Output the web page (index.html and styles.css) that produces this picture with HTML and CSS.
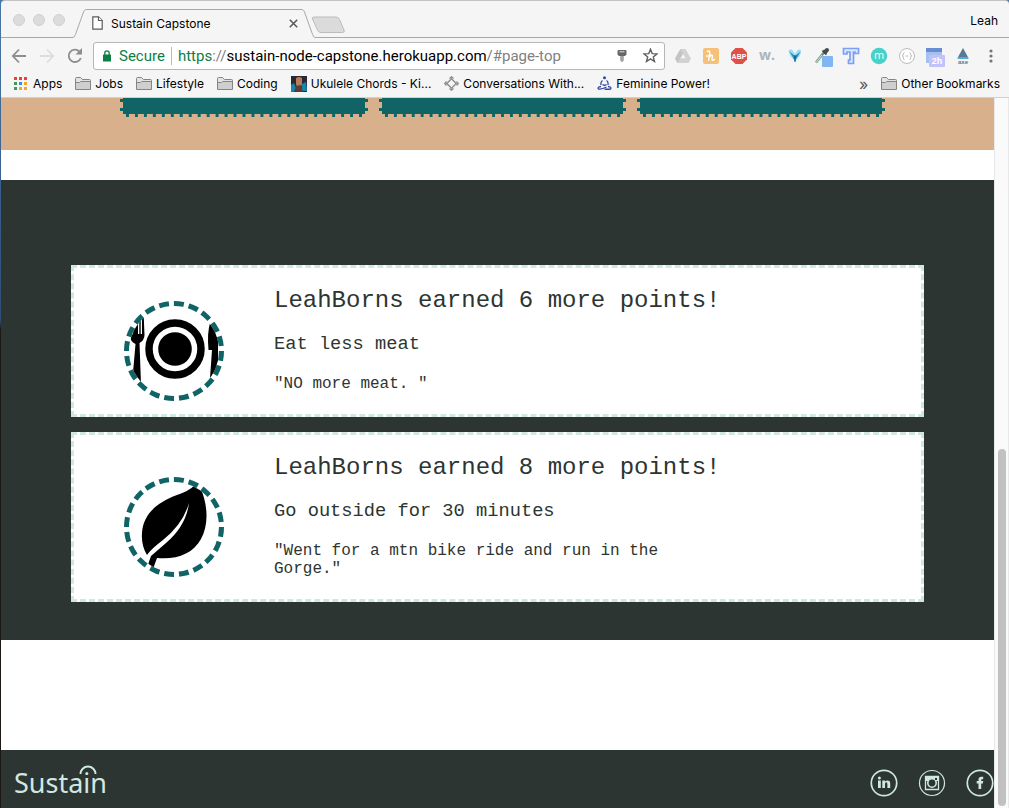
FILE: index.html
```html
<!DOCTYPE html>
<html lang="en">
<head>
<meta charset="utf-8">
<title>Sustain Capstone</title>
<link rel="stylesheet" href="styles.css">
</head>
<body>
<div class="window">
  <header class="chrome">
    <div class="tabstrip">
      <div class="lights"><button class="light" aria-label="Close"></button><button class="light" aria-label="Minimize"></button><button class="light" aria-label="Zoom"></button></div>
      <div class="tab">
        <svg class="tab-edge" width="14" height="29" viewBox="0 0 14 29"><path d="M0 28.5 C2 28 2 26 3 24 L10.500 3 C11.500 1 12 .5 14 .5" fill="none" stroke="#a9a9a9"/></svg>
        <div class="tab-body">
          <svg width="11" height="14" viewBox="0 0 11 14" fill="#fff" stroke="#5a5a5a" stroke-width="1.200"><path d="M.8 .8H6.500L10.200 4.500V13.200H.8Z"/><path d="M6.500 .8V4.500H10.200"/></svg>
          <span class="tab-title">Sustain Capstone</span>
          <button class="icon-btn close" aria-label="Close tab"><svg width="9" height="9" viewBox="0 0 9 9" stroke="#5a5a5a" stroke-width="1.600"><path d="M.8 .8L8.200 8.200M8.200 .8L.8 8.200"/></svg></button>
        </div>
        <svg class="tab-edge" width="14" height="29" viewBox="0 0 14 29"><path d="M14 28.500 C12 28 12 26 11 24 L3.500 3 C2.500 1 2 .5 0 .5" fill="none" stroke="#a9a9a9"/></svg>
      </div>
      <button class="icon-btn new-tab" aria-label="New tab"><svg width="35" height="18" viewBox="0 0 35 18"><path d="M3 1H25Q27.500 1 28.500 3.500L33 14Q34 16.500 31.500 16.500H10Q7.500 16.500 6.500 14L1.500 3Q1 1 3 1Z" fill="#dbdbdb" stroke="#bcbcbc"/></svg></button>
      <span class="profile">Leah</span>
    </div>

    <div class="toolbar">
      <button class="icon-btn slot" aria-label="Back"><svg width="16" height="16" viewBox="0 0 16 16" fill="none" stroke="#8e8e8e" stroke-width="1.800"><path d="M15 8H2M8 1.500L1.800 8L8 14.500"/></svg></button>
      <button class="icon-btn slot" aria-label="Forward"><svg width="16" height="16" viewBox="0 0 16 16" fill="none" stroke="#dcdcdc" stroke-width="1.800"><path d="M1 8H14M8 1.500L14.200 8L8 14.500"/></svg></button>
      <button class="icon-btn slot" aria-label="Reload"><svg width="16" height="16" viewBox="0 0 16 16"><path d="M13.800 10A6.200 6.200 0 1 1 12.500 3.600" fill="none" stroke="#8e8e8e" stroke-width="1.900"/><path d="M15 0V6.500H8.500Z" fill="#8e8e8e"/></svg></button>
      <div class="omnibox">
        <svg width="8" height="12" viewBox="0 0 8 12"><rect y="4.500" width="8" height="7" rx=".6" fill="#0b8043"/><path d="M1.800 5V3a2.200 2.200 0 0 1 4.400 0V5" fill="none" stroke="#0b8043" stroke-width="1.300"/></svg>
        <span class="secure">Secure</span>
        <div class="url" role="textbox" aria-label="Address" contenteditable="true" spellcheck="false"><span class="scheme">https</span><span class="muted">://</span>sustain-node-capstone.herokuapp.com<span class="muted">/#page-top</span></div>
        <button class="icon-btn slot" aria-label="Saved password"><svg width="10" height="12" viewBox="0 0 10 12"><path d="M1.500 0H8.500Q9.500 0 9.500 1V4.500L8 6H6.500V10.500L5 12L3.500 10.500V6H2L.5 4.500V1Q.5 0 1.500 0Z" fill="#666"/><path d="M2.500 1.800H7.500M5 6V11" stroke="#eee" stroke-width=".9"/></svg></button>
        <button class="icon-btn slot" aria-label="Bookmark this page"><svg width="15" height="15" viewBox="0 0 15 15"><path d="M7.500 1.200L9.200 5.600L14 5.900L10.300 8.900L11.500 13.500L7.500 10.900L3.500 13.500L4.700 8.900L1 5.900L5.800 5.600Z" fill="none" stroke="#606060" stroke-width="1.400"/></svg></button>
      </div>
      <div class="extensions">
        <button class="icon-btn slot" aria-label="Drive"><svg width="18" height="18" viewBox="0 0 18 18"><path d="M6.500 2H11.500L17 11.500L14.500 16H3.500L1 11.500Z" fill="#d2d2d2"/><path d="M6.500 2L9 6.500L3.500 16L1 11.500Z" fill="#c4c4c4"/><path d="M9 7L11.500 11.200H6.600Z" fill="#f5f5f5"/></svg></button>
        <button class="icon-btn slot" aria-label="Honey"><svg width="16" height="16" viewBox="0 0 16 16"><rect width="16" height="16" rx="2" fill="#f7c078"/><path d="M4 4Q7 1.500 6.800 5L5.500 13M3 8Q6 8.500 8 6.500M6 9.500Q9.500 5.500 9.500 8.500L9 11.500Q9.300 13.500 12 11" fill="none" stroke="#fff" stroke-width="1.400"/></svg></button>
        <button class="icon-btn slot" aria-label="Adblock Plus"><svg width="18" height="18" viewBox="0 0 18 18"><path d="M5.500 1H12.500L17 5.500V12.500L12.500 17H5.500L1 12.500V5.500Z" fill="#df5147"/><text x="9" y="12" text-anchor="middle" class="t-abp">ABP</text></svg></button>
        <button class="icon-btn slot" aria-label="WebAnnotator"><svg width="20" height="18" viewBox="0 0 20 18"><text x="10" y="13" text-anchor="middle" class="t-w">w.</text></svg></button>
        <button class="icon-btn slot" aria-label="Vector tool"><svg width="18" height="18" viewBox="0 0 18 18"><circle cx="9" cy="9" r="6.500" fill="#e8f5fb"/><path d="M2.500 3.500Q5 1.500 7 4L9 7L11 4Q13 1.500 15 3.500Q15.500 6 13.500 9L10 13Q9 15.500 8 13L4.500 9Q2.500 6 2.500 3.500Z" fill="#9bdcf3"/><path d="M3.500 4.500L9 14V9ZM14.500 4.500L9 14V9Z" fill="#258dc0"/><path d="M9 8V15" stroke="#174863"/></svg></button>
        <button class="icon-btn slot" aria-label="Color picker"><svg class="low" width="20" height="20" viewBox="0 0 20 20"><rect x="9" y="9" width="11" height="11" rx="1" fill="#80b7f2"/><path d="M3 15.500L10.500 6" stroke="#6f9985" stroke-width="2.500"/><path d="M3 15.500L9 8" stroke="#d7e9df"/><path d="M9.500 3.500L13.500 7.500" stroke="#454b49" stroke-width="1.800"/><path d="M12 5L14 3" stroke="#454b49" stroke-width="4" stroke-linecap="round"/></svg></button>
        <button class="icon-btn slot" aria-label="Type tool"><svg width="18" height="18" viewBox="0 0 18 18"><path d="M1.500 1.500H16.500V6.500H13V5H11.500V16.500H6.500V13H8V5H5V7H1.500Z" fill="#dce8ff" stroke="#7ba0f4" stroke-width="1.700"/></svg></button>
        <button class="icon-btn slot" aria-label="Momentum"><svg width="18" height="18" viewBox="0 0 18 18"><circle cx="9" cy="9" r="8.200" fill="#47d1c8"/><text x="9" y="12" text-anchor="middle" class="t-m">m</text></svg></button>
        <button class="icon-btn slot" aria-label="JSON viewer"><svg width="18" height="18" viewBox="0 0 18 18" fill="none" stroke="#bdbdbd"><circle cx="9" cy="9" r="7.500" fill="#fff"/><path d="M6.500 5.500Q5.500 5.500 5.500 7T4 9Q5.500 9 5.500 11T6.500 12.500M11.500 5.500Q12.500 5.500 12.500 7T14 9Q12.500 9 12.500 11T11.500 12.500M7.500 9H10.500"/></svg></button>
        <button class="icon-btn slot" aria-label="Calendar, 2h"><svg class="low" width="20" height="20" viewBox="0 0 20 20"><path d="M1 1H17V16H1Z" fill="#a6bfee"/><path d="M1 1H17V5H1Z" fill="#658ed3"/><rect x="4" y="8" width="16" height="12" rx="1" fill="#c2c2fb"/><text x="12" y="17" text-anchor="middle" class="t-cal">2h</text></svg></button>
        <button class="icon-btn slot" aria-label="axe"><svg width="18" height="18" viewBox="0 0 18 18"><path d="M9 1L14.500 11H3.500Z" fill="#587894"/><path d="M4 10H14L14.500 12H3.500Z" fill="#4faed3"/><text x="9" y="17" text-anchor="middle" class="t-axe">axe</text></svg></button>
        <button class="icon-btn slot" aria-label="Menu"><svg width="4" height="14" viewBox="0 0 4 14" fill="#757575"><circle cx="2" cy="2" r="1.600"/><circle cx="2" cy="7" r="1.600"/><circle cx="2" cy="12" r="1.600"/></svg></button>
      </div>
    </div>

    <svg class="defs" aria-hidden="true"><symbol id="folder" viewBox="0 0 16 14"><path d="M.5 12.500V1.500Q.5 .5 1.500 .5H5.500L7.500 2.500H14.500Q15.500 2.500 15.500 3.500V12.500Z" fill="#e3e3e3" stroke="#858585"/><path d="M1 5.500H4.500L6 4.500H15" fill="none" stroke="#858585"/><path d="M1 6H5L6.500 5H15V12H1Z" fill="#cfcfcf"/></symbol></svg>
    <nav class="bookmarks">
      <a class="bookmark apps" href="#"><svg width="13" height="13" viewBox="0 0 13 13"><path d="M0 0H3V3H0ZM5 0H8V3H5ZM10 0H13V3H10Z" fill="#ea4335"/><path d="M0 5H3V8H0ZM0 10H3V13H0Z" fill="#3d9b58"/><path d="M5 5H8V8H5Z" fill="#2f8cf0"/><path d="M10 5H13V8H10ZM5 10H8V13H5ZM10 10H13V13H10Z" fill="#f5a623"/></svg>Apps</a>
      <a class="bookmark" href="#"><svg width="16" height="14"><use href="#folder"/></svg>Jobs</a>
      <a class="bookmark" href="#"><svg width="16" height="14"><use href="#folder"/></svg>Lifestyle</a>
      <a class="bookmark" href="#"><svg width="16" height="14"><use href="#folder"/></svg>Coding</a>
      <a class="bookmark" href="#"><svg width="16" height="16" viewBox="0 0 16 16"><rect width="16" height="16" fill="#292936"/><path d="M0 9L3 7L5 12L3 16H0ZM11 8L15 6L16 15H11Z" fill="#1584ae"/><path d="M5 2Q8 0 11 2V8L10 11H6L5 8Z" fill="#bd7c59"/><path d="M5 10L10 9L12 16H4Z" fill="#603b33"/></svg>Ukulele Chords - Ki...</a>
      <a class="bookmark" href="#"><svg width="15" height="15" viewBox="0 0 15 15" fill="none" stroke="#919191"><path d="M5.500 2.500L7.500 .8L9.500 2.500M12.500 5.500L14.200 7.500L12.500 9.500M9.500 12.500L7.500 14.200L5.500 12.500M2.500 9.500L.8 7.500L2.500 5.500" stroke-width="1.400"/><path d="M7.500 2.800L12.200 7.500L7.500 12.200L2.800 7.500Z" stroke-width="1.500"/></svg>Conversations With...</a>
      <a class="bookmark" href="#"><svg width="15" height="15" viewBox="0 0 15 15" fill="none" stroke="#3347a5" stroke-width="1.300"><circle cx="7.500" cy="1.800" r="1.500" fill="#3347a5" stroke="none"/><path d="M5.500 4.500Q3.500 5.500 4 9M9.500 4.500Q11.500 5.500 11 9M5.500 8.500Q7.500 10 9.500 8.500M4 10.500Q0 11 1.500 13Q5 13.500 9.500 11M11 10.500Q15 11 13.500 13Q10 13.500 7.500 13"/></svg>Feminine Power!</a>
      <span class="more">»</span>
      <a class="bookmark" href="#"><svg width="16" height="14"><use href="#folder"/></svg>Other Bookmarks</a>
    </nav>
  </header>

  <div class="viewport">
    <main class="page">
      <section class="goals">
        <div class="goal"></div><div class="goal"></div><div class="goal"></div>
      </section>
      <section class="feed">
        <article class="post">
          <svg class="badge" viewBox="0 0 90 90" role="img" aria-label="Plate with fork and knife">
            <circle cx="46" cy="43" r="26" fill="none" stroke="#000" stroke-width="7.500"/><circle cx="46" cy="43" r="16.800"/>
            <path d="M5.500 12L9 13V28H10.300V12H11.700V28H13V12H14.800L15.500 29Q15.500 34 10.500 37L12 78H3L6.500 38Q1 35 1 30L4 28ZM81 17Q78 27 79.500 44H83L81 72L89 66V25Z"/>
          </svg>
          <div class="post-text">
            <h2>LeahBorns earned 6 more points!</h2>
            <h3>Eat less meat</h3>
            <p>"NO more meat. "</p>
          </div>
        </article>
        <article class="post">
          <svg class="badge" viewBox="0 0 90 90" role="img" aria-label="Leaf">
            <path d="M66 3Q60 9 48 13C24 22 14 35 13 51Q12 63 18 73Q22 67 34 58Q54 42 60 21Q57 44 37 61L22 74Q20 79 18 87H24L28 76C47 78 64 72 72 57C80 43 79 22 71 5Z"/>
          </svg>
          <div class="post-text">
            <h2>LeahBorns earned 8 more points!</h2>
            <h3>Go outside for 30 minutes</h3>
            <p>"Went for a mtn bike ride and run in the Gorge."</p>
          </div>
        </article>
      </section>
      <footer class="footer">
        <a class="logo" href="#">Sustain<svg class="logo-arc" width="18" height="10" viewBox="0 0 18 10"><path d="M1.500 9A7.500 7.500 0 0 1 16.500 9" fill="none" stroke="#cfe9df" stroke-width="2"/></svg></a>
        <div class="social">
          <a href="#" aria-label="LinkedIn"><svg width="28" height="28" viewBox="0 0 28 28"><circle cx="14" cy="14" r="12.700" fill="none" stroke="#cfe9df" stroke-width="1.700"/><path d="M8 11.500H10.800V19H8ZM12.300 11.500H15V12.600Q17.200 10.500 19.300 12Q20.200 12.800 20.200 14.500V19H17.400V15Q17.400 13.300 16.200 13.300T15 15V19H12.300Z" fill="#cfe9df"/><circle cx="9.400" cy="9" r="1.500" fill="#cfe9df"/></svg></a>
          <a href="#" aria-label="Instagram"><svg width="28" height="28" viewBox="0 0 28 28" fill="none" stroke="#cfe9df"><circle cx="14" cy="14" r="12.500" stroke-width="1.200"/><path d="M7.500 7.500H20.500V20.500H7.500Z" stroke-width="1.300"/><path d="M8 8H20V12H17Q14 9 11 12H8Z" fill="#cfe9df" stroke="none"/><circle cx="14" cy="14" r="4.200" fill="#2c3531" stroke-width="1.600"/><path d="M17 9H19V11H17Z" fill="#2c3531" stroke="none"/></svg></a>
          <a href="#" aria-label="Facebook"><svg width="28" height="28" viewBox="0 0 28 28"><circle cx="14" cy="14" r="12.700" fill="none" stroke="#cfe9df" stroke-width="1.700"/><path d="M12.500 20V14.500H10.700V12H12.500V10.500Q12.500 7.700 15.500 7.700H17.200V10.200H16Q15.200 10.200 15.200 11V12H17.200L16.900 14.500H15.200V20Z" fill="#cfe9df"/></svg></a>
        </div>
      </footer>
    </main>
    <div class="scrollbar"><div class="thumb"></div></div>
  </div>
</div>
</body>
</html>
```
FILE: styles.css
```css
* { box-sizing: border-box; }
body {
  margin: 0;
  padding: 1px 0 0 1px;
  background: linear-gradient(#4a77a8 0, #2c5077 320px, #1c1713 330px, #1c1713 100%);
}
.window { display: flex; flex-direction: column; min-height: calc(100vh - 1px); }

.chrome {
  font-family: Inter, "Liberation Sans", sans-serif;
  font-size: 12px;
  color: #000;
  background: #f5f5f5;
  border-bottom: 1px solid #d0d0d0;
  border-radius: 4px 4px 0 0;
  box-shadow: 0 -1px 0 #c4c4c4;
}
.icon-btn { display: flex; align-items: center; justify-content: center; padding: 0; border: 0; background: none; }
.slot { width: 28px; height: 28px; flex: none; }
.low { margin-top: 3px; }
.defs { display: none; }

.tabstrip { display: flex; height: 37px; background: linear-gradient(#a9a9a9, #a9a9a9) bottom / 100% 1px no-repeat; }
.lights { display: flex; gap: 8px; padding: 13px 8px 0 12px; }
.light { width: 12px; height: 12px; padding: 0; border: 1px solid #d0d0d0; border-radius: 50%; background: #dcdcdc; }
.tab { display: flex; align-self: flex-end; width: 242px; height: 29px; background: #f5f5f5; }
.tab-edge { flex: none; }
.tab-body { display: flex; flex: 1; align-items: center; gap: 8px; padding: 0 0 2px 5px; border-top: 1px solid #a9a9a9; }
.tab-title { flex: 1; white-space: nowrap; }
.close { width: 16px; height: 18px; }
.new-tab { align-self: flex-start; margin: 15px 0 0 -4px; }
.profile { margin-left: auto; padding: 12px 11px 0 0; }

.toolbar { display: flex; align-items: center; height: 35px; padding: 0 4px; }
.omnibox {
  display: flex;
  flex: 1;
  align-items: center;
  min-width: 0;
  height: 28px;
  margin: 0 4px;
  padding-left: 9px;
  background: #fff;
  border: 1px solid #b6b6b6;
  border-radius: 3px;
  font-family: Roboto, "Liberation Sans", sans-serif;
  font-size: 15px;
  white-space: nowrap;
}
.secure { margin: 0 6px 0 8px; color: #0b8043; }
.url { flex: 1; padding-left: 6px; border-left: 1px solid #bdbdbd; overflow: hidden; outline: 0; line-height: 18px; }
.scheme { color: #0b8043; }
.muted { color: #808080; }
.extensions { display: flex; }
.t-abp { font: bold 7px "Liberation Sans", sans-serif; fill: #fff; }
.t-w { font: bold 14px "Open Sans", sans-serif; fill: #abb4b8; }
.t-m { font: 11px "Open Sans", sans-serif; fill: #fff; }
.t-cal { font: bold 9px "Liberation Sans", sans-serif; fill: #fff; }
.t-axe { font: bold 6px "Liberation Sans", sans-serif; fill: #587894; }

.bookmarks { display: flex; align-items: center; gap: 13px; height: 24px; padding: 0 9px 3px 13px; }
.bookmark { display: flex; align-items: center; gap: 4px; color: #000; text-decoration: none; white-space: nowrap; }
.apps { gap: 6px; }
.more { margin-left: auto; color: #555; font-size: 16px; line-height: 16px; }

.viewport { display: flex; flex: 1; background: #fff; }
.page { flex: 1; min-width: 0; display: flex; flex-direction: column; font-family: "Liberation Mono", monospace; color: #2c3531; }
.goals { display: grid; grid-template-columns: repeat(3, 1fr); gap: 11px; padding: 0 11% 33px 12%; margin-bottom: 30px; overflow: hidden; background: #d9b08c; }
.goal { height: 60px; margin-top: -41px; background: #116466; border: 3px dashed #d9b08c; }

.feed { display: flex; flex-direction: column; gap: 15px; padding: 85px 70px 38px; background: #2c3531; }
.post { display: flex; align-items: center; gap: 50px; padding: 0 50px; background: #fff; border: 3px dashed #d1e8e2; }
.badge { flex: none; width: 100px; height: 100px; margin-top: 20px; border: 5px dashed #116466; border-radius: 50%; }
.post-text { max-width: 450px; padding: 19px 0 21px; }
.post h2, .post h3, .post p { margin: 0; font-weight: normal; }
.post h2 { margin-bottom: 20px; line-height: 27px; white-space: nowrap; }
.post h3 { margin-bottom: 20px; line-height: 21px; }
.post p { max-width: 400px; line-height: 18px; }

.footer { display: flex; align-items: center; justify-content: space-between; flex: 1; min-height: 58px; margin-top: 110px; padding: 8px 0 0 13px; background: #2c3531; }
.logo { position: relative; color: #d1e8e2; font: 27px "Noto Sans", sans-serif; text-decoration: none; line-height: 36px; }
.logo-arc { position: absolute; right: 10px; top: 0; }
.social { display: flex; gap: 20px; }
.social svg { display: block; }

.scrollbar { display: flex; flex-direction: column; justify-content: flex-end; width: 15px; padding: 0 3px 2px; background: #fafafa; border-left: 1px solid #e8e8e8; border-right: 1px solid #e8e8e8; }
.thumb { height: 50.4%; width: 8px; border-radius: 4px; background: #c1c1c1; }
```
